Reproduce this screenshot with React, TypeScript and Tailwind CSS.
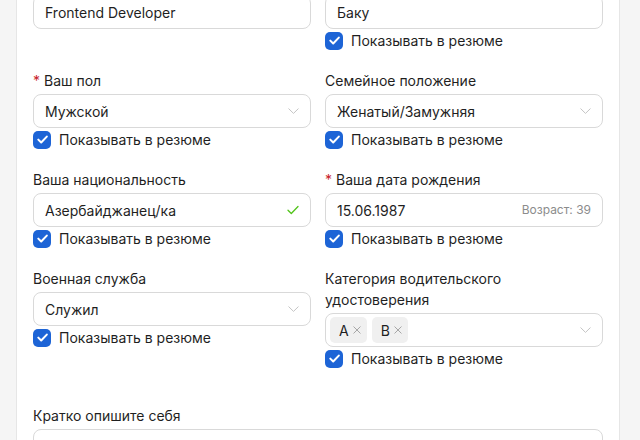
import React from "react";

const Chevron = () => (
  <svg width="11" height="6" viewBox="0 0 11 6" fill="none" className="shrink-0">
    <path d="M0.8 0.8l4.7 4.6 4.7-4.6" stroke="#c4c4c4" strokeWidth="1" strokeLinecap="round" strokeLinejoin="round" />
  </svg>
);

const GreenCheck = () => (
  <svg width="12" height="10" viewBox="0 0 12 10" fill="none" className="shrink-0">
    <path d="M1 5.2l3.3 3.3L11 1.5" stroke="#52c41a" strokeWidth="1.3" strokeLinecap="round" strokeLinejoin="round" />
  </svg>
);

const Check = () => (
  <div className="flex items-center gap-2 h-[21px] mt-[1px]">
    <span className="w-[18px] h-[18px] rounded-[5px] bg-[#1d64d6] flex items-center justify-center shrink-0">
      <svg width="11" height="9" viewBox="0 0 11 9" fill="none">
        <path d="M1.3 4.6l2.9 2.9L9.8 1.6" stroke="white" strokeWidth="2" strokeLinecap="round" strokeLinejoin="round" />
      </svg>
    </span>
    <span className="text-[14px] leading-[21px] text-[#1f1f1f]">Показывать в резюме</span>
  </div>
);

const Label = ({ children, required }: { children: React.ReactNode; required?: boolean }) => (
  <div className="text-[14px] leading-[21px] text-[#1f1f1f] mb-[3px]">
    {required && <span className="text-[#c8222a] mr-[4px]">*</span>}
    {children}
  </div>
);

const Box = ({ children }: { children: React.ReactNode }) => (
  <div className="h-[34px] rounded-[8px] border border-[#d9d9d9] bg-white flex items-center pl-[11px] pr-[11px] text-[14px] text-[#1f1f1f]">
    {children}
  </div>
);

const Tag = ({ t }: { t: string }) => (
  <span className="h-[26px] pl-[9px] pr-[6px] rounded-[5px] bg-[#f0f0f0] flex items-center gap-[4px] text-[14px] text-[#1f1f1f]">
    {t}
    <svg width="8" height="8" viewBox="0 0 8 8" fill="none">
      <path d="M0.8 0.8l6.4 6.4M7.2 0.8L0.8 7.2" stroke="#a6a6a6" strokeWidth="1" strokeLinecap="round" />
    </svg>
  </span>
);

export default function App() {
  return (
    <div className="min-h-screen h-[440px] overflow-hidden bg-[#f5f5f5] font-['Inter','Noto_Sans',sans-serif]">
      <div className="ml-4 w-[604px] -mt-[21px] bg-white border-x border-[#e6e6e6] px-4 pt-4 pb-10">
        <div className="grid grid-cols-2 gap-x-[14px] gap-y-[19px] items-start">
          <div>
            <Box>Frontend Developer</Box>
          </div>
          <div>
            <Box>Баку</Box>
            <Check />
          </div>

          <div>
            <Label required>Ваш пол</Label>
            <Box>
              <span className="flex-1">Мужской</span>
              <Chevron />
            </Box>
            <Check />
          </div>
          <div>
            <Label>Семейное положение</Label>
            <Box>
              <span className="flex-1">Женатый/Замужняя</span>
              <Chevron />
            </Box>
            <Check />
          </div>

          <div>
            <Label>Ваша национальность</Label>
            <Box>
              <span className="flex-1">Азербайджанец/ка</span>
              <GreenCheck />
            </Box>
            <Check />
          </div>
          <div>
            <Label required>Ваша дата рождения</Label>
            <Box>
              <span className="flex-1">15.06.1987</span>
              <span className="text-[12px] text-[#8c8c8c]">Возраст: 39</span>
            </Box>
            <Check />
          </div>

          <div>
            <Label>Военная служба</Label>
            <Box>
              <span className="flex-1">Служил</span>
              <Chevron />
            </Box>
            <Check />
          </div>
          <div>
            <Label>Категория водительского удостоверения</Label>
            <div className="h-[34px] mt-[1px] rounded-[8px] border border-[#d9d9d9] bg-white flex items-center pl-[4px] pr-[11px]">
              <div className="flex-1 flex items-center gap-[5px]">
                <Tag t="A" />
                <Tag t="B" />
              </div>
              <Chevron />
            </div>
            <Check />
          </div>
        </div>

        <div className="mt-[36px]">
          <Label>Кратко опишите себя</Label>
          <div className="h-[90px] rounded-[8px] border border-[#d9d9d9] bg-white px-[11px] pt-[5px] text-[14px] leading-[21px] text-[#bfbfbf]">
            Расскажите о своём опыте, навыках и достижениях, которые выделяют вас среди других кандидатов
          </div>
        </div>
      </div>
    </div>
  );
}
